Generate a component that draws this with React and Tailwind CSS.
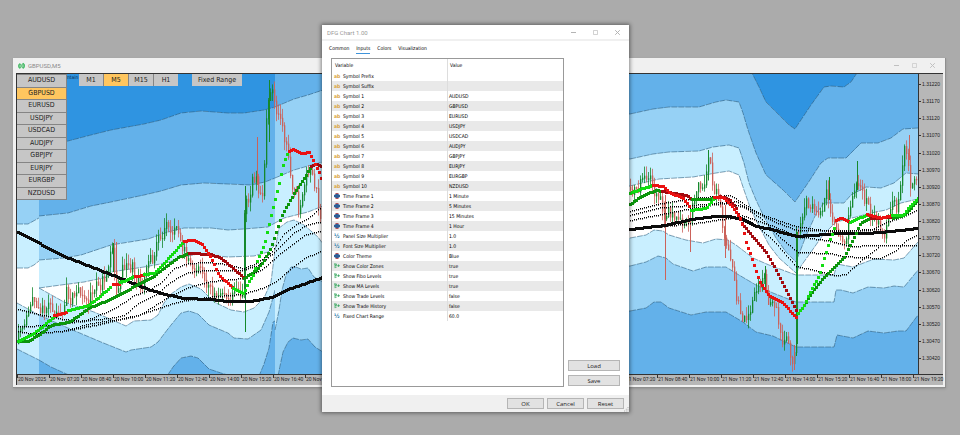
import React, { useState } from "react";
import clsx from "clsx";

const SYMBOLS = ["AUDUSD", "GBPUSD", "EURUSD", "USDJPY", "USDCAD", "AUDJPY", "GBPJPY", "EURJPY", "EURGBP", "NZDUSD"];
const TIMEFRAMES = ["M1", "M5", "M15", "H1"];
const TABS = ["Common", "Inputs", "Colors", "Visualization"];

const INPUTS = [
    ["text", "Symbol Prefix", ""],
    ["text", "Symbol Suffix", ""],
    ...SYMBOLS.map((s, i) => ["text", `Symbol ${i + 1}`, s]),
    ["enum", "Time Frame 1", "1 Minute"],
    ["enum", "Time Frame 2", "5 Minutes"],
    ["enum", "Time Frame 3", "15 Minutes"],
    ["enum", "Time Frame 4", "1 Hour"],
    ["number", "Panel Size Multiplier", "1.0"],
    ["number", "Font Size Multiplier", "1.0"],
    ["enum", "Color Theme", "Blue"],
    ["bool", "Show Color Zones", "true"],
    ["bool", "Show Fibo Levels", "true"],
    ["bool", "Show MA Levels", "true"],
    ["bool", "Show Trade Levels", "false"],
    ["bool", "Show Trade History", "false"],
    ["number", "Fixed Chart Range", "60.0"],
];

const PRICES = Array.from({ length: 17 }, (_, i) => (1.3122 - i * 0.0005).toFixed(5));

// one label every 80 minutes, the first one carries the year
const TIMES = Array.from({ length: 29 }, (_, i) => {
    if (i === 0) return "20 Nov 2025";
    const min = 360 + i * 80;
    const day = 20 + Math.floor(min / 1440);
    const hh = String(Math.floor(min / 60) % 24).padStart(2, "0");
    const mm = String(min % 60).padStart(2, "0");
    return `${day} Nov ${hh}:${mm}`;
});

const C1 = "#2f94e1";
const C2 = "#63b1ea";
const C3 = "#96d1f5";
const C4 = "#c9efff";
const W = "#ffffff";

const ZONES = [
    {
        from: 16, to: 38, base: C3,
        layers: [
            [C4, [16, 224, 27, 224, 38, 218]],
            [W, [16, 268, 27, 268, 33, 265, 38, 261]],
            [C4, [16, 303, 38, 315]],
            [C3, [16, 349, 38, 360]],
        ],
    },
    {
        from: 38, to: 274, base: C1,
        layers: [
            [C2, [38, 147, 67, 141, 90, 135, 110, 130, 143, 124, 160, 120, 180, 113, 200, 111, 227, 113, 243, 113, 263, 110, 274, 107]],
            [C3, [38, 216, 67, 213, 90, 206, 110, 202, 143, 195, 160, 191, 180, 185, 203, 183, 227, 184, 250, 185, 264, 182, 274, 178]],
            [C4, [38, 260, 63, 258, 80, 255, 110, 245, 147, 239, 167, 232, 183, 228, 210, 228, 227, 230, 243, 229, 267, 227, 274, 223]],
            [W, [38, 288, 60, 285, 83, 282, 107, 277, 110, 272, 143, 267, 165, 263, 182, 257, 197, 254, 227, 257, 253, 256, 267, 252, 274, 245]],
            [C4, [38, 288, 63, 302, 93, 312, 125, 326, 133, 321, 150, 320, 157, 315, 163, 303, 170, 294, 180, 287, 188, 284, 200, 289, 213, 302, 230, 310, 243, 312, 253, 308, 263, 298, 270, 282, 274, 250]],
            [C3, [38, 315, 67, 328, 100, 342, 125, 352, 130, 350, 150, 347, 157, 342, 163, 334, 170, 325, 180, 313, 188, 311, 197, 314, 208, 325, 227, 333, 233, 338, 247, 339, 260, 330, 268, 312, 274, 290]],
            [C2, [38, 360, 50, 367, 70, 376, 166, 376, 172, 367, 180, 358, 190, 356, 197, 358, 208, 369, 220, 373, 230, 376, 258, 376, 263, 364, 268, 348, 272, 322, 274, 321]],
        ],
    },
    {
        from: 274, to: 629, base: C2,
        layers: [
            [C3, [274, 107, 293, 99, 307, 95, 322, 90, 629, 114]],
            [C4, [274, 178, 293, 170, 307, 166, 322, 162, 629, 159]],
            [W, [274, 223, 283, 218, 307, 212, 322, 206, 629, 186]],
            [C4, [274, 250, 278, 228, 286, 222, 293, 220, 303, 225, 317, 237, 322, 244, 629, 238]],
            [C3, [274, 330, 278, 310, 281, 290, 285, 275, 290, 267, 295, 267, 300, 269, 307, 268, 313, 277, 322, 282, 629, 266]],
            [C2, [277, 376, 279, 366, 282, 352, 287, 342, 292, 338, 300, 340, 307, 339, 314, 347, 322, 352, 629, 311]],
        ],
    },
    {
        from: 629, to: 917, base: C2,
        layers: [
            [C1, [749, 70, 752, 75, 758, 87, 765, 102, 778, 115, 788, 125, 794, 129, 810, 105, 823, 87, 830, 86, 843, 87, 850, 82, 858, 70]],
            [C3, [629, 114, 652, 109, 668, 107, 698, 107, 715, 102, 725, 100, 738, 102, 742, 113, 747, 130, 755, 153, 765, 175, 782, 190, 794, 202, 807, 183, 820, 163, 827, 158, 845, 158, 860, 143, 877, 143, 890, 138, 902, 129, 917, 128]],
            [C4, [629, 159, 652, 154, 668, 152, 698, 151, 712, 147, 728, 145, 738, 148, 743, 163, 748, 183, 755, 200, 763, 217, 775, 238, 785, 252, 795, 262, 805, 236, 815, 214, 823, 203, 843, 203, 850, 195, 865, 187, 880, 188, 893, 183, 905, 173, 917, 174]],
            [W, [629, 186, 658, 179, 692, 177, 715, 173, 728, 171, 738, 175, 743, 190, 750, 210, 758, 226, 768, 245, 778, 258, 795, 273, 810, 252, 822, 235, 835, 222, 855, 217, 870, 213, 885, 210, 900, 203, 917, 199]],
            [C4, [629, 238, 645, 235, 653, 230, 662, 231, 668, 235, 685, 240, 702, 243, 715, 239, 727, 240, 735, 245, 752, 258, 768, 265, 795, 275, 833, 275, 836, 264, 852, 267, 873, 259, 893, 260, 903, 258, 917, 242]],
            [C3, [629, 266, 645, 262, 657, 256, 665, 258, 672, 264, 692, 271, 705, 267, 725, 267, 738, 275, 755, 285, 772, 293, 795, 302, 833, 302, 835, 290, 840, 290, 852, 293, 867, 287, 883, 288, 893, 286, 903, 287, 917, 270]],
            [C2, [629, 311, 645, 308, 653, 302, 660, 302, 668, 308, 690, 315, 705, 312, 725, 312, 742, 322, 755, 332, 772, 336, 795, 347, 833, 347, 836, 335, 852, 338, 867, 331, 883, 333, 897, 331, 905, 331, 917, 315]],
        ],
    },
];

const BLACK = "#0b0b0b";
const BRIGHT_GREEN = "#12dd12";
const BRIGHT_RED = "#ea1111";
const DARK_GREEN = "#0c960c";
const DARK_RED = "#a30b10";

const LEVELS = [
    [17, 309, 43, 315, 63, 319, 83, 321, 97, 315, 110, 310, 123, 302, 133, 295, 147, 290, 160, 282, 173, 268, 187, 263, 203, 262, 220, 263, 243, 268, 257, 262, 270, 252, 283, 233, 297, 223, 307, 218, 322, 205],
    [17, 326, 50, 325, 83, 320, 107, 318, 123, 315, 137, 303, 157, 293, 165, 285, 177, 277, 187, 272, 203, 270, 240, 270, 257, 265, 273, 252, 293, 232, 307, 224, 322, 221],
    [17, 331, 30, 333, 60, 331, 93, 325, 113, 320, 140, 314, 157, 303, 170, 295, 180, 290, 193, 285, 210, 281, 240, 278, 260, 270, 283, 250, 303, 235, 322, 230],
    [61, 331, 90, 323, 130, 317, 157, 308, 175, 302, 190, 299, 215, 296, 240, 294, 260, 288, 275, 281, 290, 268, 305, 257, 322, 250],
    [629, 211, 660, 203, 700, 197, 730, 195, 745, 205, 760, 214, 795, 226, 830, 231, 870, 230, 885, 222, 900, 217, 917, 209],
    [629, 215, 660, 207, 690, 205, 720, 202, 745, 207, 770, 220, 797, 230, 840, 230, 880, 229],
    [629, 220, 670, 212, 700, 206, 735, 201, 760, 218, 780, 238, 797, 252, 830, 253, 843, 256, 880, 258, 895, 250, 905, 240, 917, 234],
    [629, 228, 670, 225, 700, 222, 740, 216, 757, 226, 775, 243, 795, 266, 815, 270, 835, 275, 845, 274, 860, 260, 877, 247],
    [741, 215, 770, 225, 797, 236, 825, 240, 850, 246, 870, 245, 917, 245],
];

const AVERAGES = [
    [BLACK, [17, 232, 63, 256, 117, 277, 147, 289, 160, 293, 183, 298, 210, 299, 227, 301, 250, 301, 270, 297, 290, 288, 322, 277]],
    [BLACK, [629, 229, 664, 225, 690, 219, 715, 216, 728, 216, 740, 219, 755, 226, 770, 229, 795, 236, 810, 235, 840, 233, 867, 233, 890, 231, 917, 228]],
    // medium average
    [DARK_GREEN, [17, 341, 27, 341, 40, 333, 50, 325, 67, 322, 75, 317, 87, 308, 107, 300, 123, 292, 137, 284, 150, 278, 160, 270, 177, 257, 188, 253]],
    [DARK_RED, [188, 253, 210, 254, 220, 258, 232, 268, 243, 278]],
    [DARK_GREEN, [243, 278, 255, 270, 263, 260, 270, 247, 275, 232, 280, 217, 285, 207, 293, 193, 303, 178, 310, 166]],
    [DARK_RED, [310, 166, 315, 164, 322, 167]],
    [DARK_GREEN, [629, 204, 642, 195, 655, 190, 661, 191]],
    [DARK_RED, [661, 191, 685, 195, 691, 199]],
    [DARK_GREEN, [691, 199, 708, 199, 719, 196]],
    [DARK_RED, [719, 196, 728, 199, 735, 208, 740, 222, 748, 232, 765, 252, 775, 270, 785, 290, 795, 310]],
    [DARK_GREEN, [797, 313, 803, 305, 810, 293, 823, 277, 843, 257, 853, 237, 860, 222, 870, 218]],
    [DARK_RED, [870, 218, 892, 217]],
    [DARK_GREEN, [892, 218, 903, 215, 917, 200]],
    // fast average
    [BRIGHT_GREEN, [17, 341, 30, 335, 43, 325, 53, 316]],
    [BRIGHT_RED, [53, 315, 65, 312]],
    [BRIGHT_GREEN, [67, 310, 87, 305, 97, 298, 110, 286]],
    [BRIGHT_RED, [112, 284, 118, 284]],
    [BRIGHT_GREEN, [119, 282, 125, 280, 133, 276]],
    [BRIGHT_RED, [134, 276, 143, 275]],
    [BRIGHT_GREEN, [143, 274, 153, 273, 160, 266, 170, 255, 183, 241]],
    [BRIGHT_RED, [183, 241, 187, 240, 193, 240, 202, 245, 210, 258, 218, 275, 231, 287]],
    [BRIGHT_GREEN, [232, 288, 243, 293, 247, 282, 252, 275, 257, 258, 263, 245, 270, 215, 277, 187, 282, 165, 287, 151]],
    [BRIGHT_RED, [288, 151, 292, 149, 300, 153, 308, 152, 313, 162, 318, 172, 322, 183]],
    [BRIGHT_GREEN, [629, 193, 642, 188, 652, 185]],
    [BRIGHT_RED, [652, 185, 662, 186, 668, 192, 682, 198, 689, 207]],
    [BRIGHT_GREEN, [690, 210, 705, 208, 713, 198]],
    [BRIGHT_RED, [713, 197, 722, 197, 732, 207, 740, 220, 745, 242, 752, 262, 758, 280, 768, 295, 782, 303, 795, 317]],
    [BRIGHT_GREEN, [797, 313, 803, 305, 810, 290, 818, 275, 823, 258, 828, 242, 834, 225]],
    [BRIGHT_RED, [835, 220, 840, 218, 848, 221]],
    [BRIGHT_GREEN, [849, 222, 857, 218, 866, 215]],
    [BRIGHT_RED, [866, 214, 880, 218, 891, 215]],
    [BRIGHT_GREEN, [891, 215, 902, 215, 908, 207, 917, 198]],
];

const PRICE_PATHS = [
    [17, 344, 20, 328, 26, 326, 32, 297, 37, 302, 43, 309, 50, 307, 57, 315, 64, 320, 67, 290, 70, 305, 77, 290, 82, 297, 89, 303, 94, 287, 101, 284, 107, 272, 111, 250, 114, 255, 116, 289, 120, 280, 124, 266, 133, 268, 137, 279, 143, 284, 147, 262, 153, 260, 158, 237, 163, 238, 167, 219, 172, 232, 176, 224, 180, 238, 185, 252, 193, 273, 198, 265, 207, 282, 217, 300, 223, 290, 230, 304, 235, 287, 243, 296, 244, 240, 246, 190, 250, 204, 254, 175, 257, 178, 260, 203, 264, 185, 268, 100, 273, 92, 278, 114, 283, 128, 288, 150, 292, 183, 297, 197, 300, 214, 305, 182, 310, 165, 315, 182, 322, 218],
    [629, 183, 637, 193, 645, 174, 650, 178, 655, 193, 661, 194, 664, 225, 667, 212, 672, 211, 677, 218, 687, 222, 690, 226, 694, 198, 700, 183, 703, 190, 709, 158, 712, 172, 715, 193, 720, 197, 724, 232, 732, 262, 737, 300, 742, 315, 747, 320, 752, 306, 758, 287, 765, 276, 768, 298, 773, 300, 778, 315, 782, 344, 787, 337, 793, 358, 795, 350, 797, 236, 800, 228, 803, 216, 807, 200, 815, 207, 822, 217, 828, 190, 832, 217, 837, 234, 845, 246, 849, 220, 852, 196, 860, 182, 865, 197, 871, 216, 878, 222, 885, 240, 890, 212, 894, 198, 898, 213, 902, 180, 905, 147, 909, 160, 911, 186, 917, 176],
];

// single bars with long shadows
const SPIKES = [
    [112, 243, 272, "up"], [115, 242, 297, "down"], [244, 186, 332, "up"], [256, 137, 185, "down"],
    [268, 80, 142, "up"], [273, 84, 100, "down"], [664, 195, 280, "down"], [689, 205, 252, "down"], [707, 150, 180, "up"],
    [724, 205, 258, "down"], [764, 266, 290, "up"], [793, 345, 370, "down"], [795, 228, 356, "up"],
    [828, 177, 200, "up"], [856, 161, 190, "up"], [908, 135, 160, "down"],
];

const UP = "#15882c";
const DOWN = "#cb625a";

function yAt(points, x) {
    for (let i = 2; i < points.length; i += 2) {
        if (x <= points[i]) {
            const t = (x - points[i - 2]) / (points[i] - points[i - 2]);
            return points[i - 1] + t * (points[i + 1] - points[i - 1]);
        }
    }
    return points[points.length - 1];
}

// one square mark per bar, bars are two units apart
function marks(points, width, height) {
    let d = "";
    const half = Math.floor(width / 2);
    const end = points[points.length - 2];
    for (let x = points[0]; x <= end; x += 2) {
        d += `M${x - half} ${Math.round(yAt(points, x)) - half}h${width}v${height}h-${width}z`;
    }
    return d;
}

function linePath(points) {
    let d = `M${points[0]} ${points[1]}`;
    for (let i = 2; i < points.length; i += 2) d += `L${points[i]} ${points[i + 1]}`;
    return d;
}

function noise(n) {
    const v = Math.sin(n * 12.9898) * 43758.5453;
    return v - Math.floor(v);
}

function buildCandles() {
    const out = [];
    PRICE_PATHS.forEach((path) => {
        const end = path[path.length - 2];
        for (let x = path[0]; x < end; x += 2) {
            const open = yAt(path, x) + (noise(x) - 0.5) * 12;
            const close = yAt(path, x + 2) + (noise(x + 2) - 0.5) * 12;
            out.push({
                x,
                top: Math.min(open, close),
                bottom: Math.max(open, close) + 1,
                high: Math.min(open, close) - noise(x + 91) * 10,
                low: Math.max(open, close) + noise(x + 47) * 10,
                up: close < open,
            });
        }
    });
    return out;
}

const CANDLES = buildCandles();

function PriceChart() {
    return (
        <svg
            viewBox="16 74 901 300"
            preserveAspectRatio="none"
            className="block h-full w-full"
            role="img"
            aria-label="GBPUSD price chart"
        >
            {ZONES.map((zone) => (
                <g key={zone.from}>
                    <rect x={zone.from} y="74" width={zone.to - zone.from} height="300" fill={zone.base} shapeRendering="crispEdges" />
                    {zone.layers.map(([fill, points], i) => (
                        <path
                            key={i}
                            d={fill === C1 ? `${linePath(points)}Z` : `${linePath(points)}V376H${points[0]}Z`}
                            fill={fill}
                            shapeRendering="crispEdges"
                        />
                    ))}
                    {zone.layers.map(([, points], i) => (
                        <path
                            key={i}
                            d={linePath(points)}
                            fill="none"
                            stroke="#34627f"
                            strokeWidth="0.6"
                            strokeDasharray="6 1"
                        />
                    ))}
                </g>
            ))}
            {CANDLES.map((c) => (
                <g key={c.x} fill={c.up ? UP : DOWN}>
                    <rect x={c.x} y={c.high} width="0.8" height={c.low - c.high} />
                    <rect x={c.x} y={c.top} width="1.3" height={c.bottom - c.top} />
                </g>
            ))}
            {SPIKES.map(([x, high, low, dir]) => (
                <rect key={x} x={x} y={high} width="1" height={low - high} fill={dir === "up" ? UP : DOWN} />
            ))}
            <rect x="795" y="232" width="2" height="112" fill={UP} />
            {LEVELS.map((points, i) => (
                <path key={i} d={marks(points, 1, 1.6)} fill="#000" />
            ))}
            {AVERAGES.map(([color, points], i) => (
                <path key={i} d={marks(points, 3, 3)} fill={color} />
            ))}
        </svg>
    );
}

function PanelButton({ active, className, children, ...props }) {
    return (
        <button
            type="button"
            className={clsx(
                "flex items-center justify-center text-[7px] leading-none text-[#222]",
                active ? "bg-[#ffc65f]" : "bg-[#c6c6c6]",
                className
            )}
            {...props}
        >
            {children}
        </button>
    );
}

function ChartWindow() {
    const [symbol, setSymbol] = useState("GBPUSD");
    const [timeframe, setTimeframe] = useState("M5");

    return (
        <section className="border-r border-b border-[#8f8f8f] bg-[#f0f0f0] pr-[2px] pb-[2px] pl-[3px] shadow-sm">
            <header className="flex h-[15px] items-center gap-[3px] pr-[8px] pl-[2px] text-[#8a8a8a]">
                <svg viewBox="0 0 8 8" className="h-[8px] w-[7px]" fill="none" stroke="#35b558" strokeWidth="1">
                    <path d="M2 1v6M6 0.5v6.5" />
                    <rect x="0.6" y="2" width="2.8" height="4" rx="1" />
                    <rect x="4.6" y="1.5" width="2.8" height="4.5" rx="1" />
                </svg>
                <h1 className="font-['Roboto',sans-serif] text-[6px]">{symbol},{timeframe}</h1>
                <div className="ml-auto flex gap-[13px] text-[#c0c0c0]">
                    <WindowControls />
                </div>
            </header>

            <div className="border-t border-l border-[#333] bg-[#b7b7b7]">
                <div className="flex h-[300px]">
                    <div className="relative min-w-0 flex-1 border-r border-[#333]">
                        <PriceChart />
                        <div className="absolute top-0 left-0 flex items-start font-['DejaVu_Sans_Condensed','DejaVu_Sans',sans-serif]">
                            <div className="grid h-[126px] w-[50px] grid-rows-10 gap-px border-y border-r border-[#858585] bg-[#858585]">
                                {SYMBOLS.map((s) => (
                                    <PanelButton key={s} active={s === symbol} onClick={() => setSymbol(s)}>
                                        {s}
                                    </PanelButton>
                                ))}
                            </div>
                            <span className="w-[12px] overflow-hidden text-[5px] leading-[7px] text-[#0b2c4a]">ntain</span>
                            <div className="flex gap-px bg-[#858585]">
                                {TIMEFRAMES.map((t) => (
                                    <PanelButton
                                        key={t}
                                        active={t === timeframe}
                                        className="h-[12px] w-[24px]"
                                        onClick={() => setTimeframe(t)}
                                    >
                                        {t}
                                    </PanelButton>
                                ))}
                            </div>
                            <PanelButton className="ml-[14px] h-[12px] w-[50px]">Fixed Range</PanelButton>
                        </div>
                    </div>
                    <ul className="flex w-[24px] flex-col pt-[2px] pb-[7px] font-['Liberation_Sans',sans-serif] text-[5px] leading-none text-[#222]">
                        {PRICES.map((p) => (
                            <li key={p} className="flex flex-1 items-center gap-px">
                                <span className="h-px w-[2px] bg-[#333]" />
                                {p}
                            </li>
                        ))}
                    </ul>
                </div>
                <ul className="flex h-[11px] border-t border-[#333] font-['Roboto',sans-serif] text-[5px] leading-[9px] text-[#222]">
                    {TIMES.map((t) => (
                        <li key={t} className="w-8 shrink-0 whitespace-nowrap last:w-0">
                            <span className="inline-block h-[3px] w-px bg-[#333] align-top" />
                            {t}
                        </li>
                    ))}
                </ul>
            </div>
        </section>
    );
}

function WindowControls() {
    return (
        <>
            <button type="button" aria-label="Minimize">
                <svg viewBox="0 0 5 5" className="size-[5px]" fill="none" stroke="currentColor"><path d="M0 2.5h5" /></svg>
            </button>
            <button type="button" aria-label="Maximize">
                <svg viewBox="0 0 5 5" className="size-[5px]" fill="none" stroke="currentColor" strokeWidth="0.6"><path d="M.5 .5h4v4h-4z" /></svg>
            </button>
            <button type="button" aria-label="Close">
                <svg viewBox="0 0 5 5" className="size-[5px]" fill="none" stroke="currentColor"><path d="M.2 .2l4.6 4.6M4.8 .2L.2 4.8" /></svg>
            </button>
        </>
    );
}

function TypeIcon({ type }) {
    if (type === "text") {
        return <span aria-hidden="true" className="text-[5px] font-bold text-[#d8a23a]">ab</span>;
    }
    if (type === "number") {
        return <span aria-hidden="true" className="text-[6px] font-bold text-[#2a78a8]">½</span>;
    }
    if (type === "enum") {
        return (
            <svg viewBox="0 0 6 6" className="size-[6px]">
                <path d="M1.5 0h3v2h-3zM1.5 4h3v2h-3z" fill="#b5525a" />
                <rect x="0" y="1.8" width="6" height="2.4" fill="#2e5f98" />
                <rect x="1.2" y="1" width="3.6" height="4" rx="1" fill="#2e5f98" />
            </svg>
        );
    }
    return (
        <svg viewBox="0 0 7 6" className="h-[6px] w-[7px]" fill="none" stroke="#2fa257" strokeWidth="0.9">
            <path d="M0 .6h1.2v4.8M1.2 .6h1.6v2H1.2M1.6 5.4l1.6-1.6M3.8 2.6h3M5.3 1.1v3" />
        </svg>
    );
}

function DialogButton({ className, children }) {
    return (
        <button
            type="button"
            className={clsx("h-[11px] border border-[#b5b5b5] bg-[#e2e2e2] font-['Open_Sans',sans-serif] text-[6px] leading-none text-[#222]", className)}
        >
            {children}
        </button>
    );
}

function SettingsDialog() {
    const [tab, setTab] = useState("Inputs");

    return (
        <section
            role="dialog"
            aria-label="DFG Chart 1.00"
            className="absolute top-[25px] left-[322px] w-[307px] bg-white font-['DejaVu_Sans_Condensed','DejaVu_Sans',sans-serif] text-[5px] text-black shadow-[0_0_4px_1px_rgba(0,0,0,0.45)]"
        >
            <header className="flex h-[16px] items-center justify-between border-b-2 border-[#f0f0f0] pr-[9px] pl-[5px]">
                <h2 className="font-['Roboto',sans-serif] text-[6px] text-[#999]">DFG Chart 1.00</h2>
                <div className="flex gap-[17px] text-[#b4b4b4]">
                    <WindowControls />
                </div>
            </header>

            <nav role="tablist" className="flex gap-[7px] px-[7px] pt-[2px] leading-[10px]">
                {TABS.map((t) => (
                    <button
                        key={t}
                        type="button"
                        role="tab"
                        aria-selected={t === tab}
                        onClick={() => setTab(t)}
                        className={clsx("border-b", t === tab ? "border-[#3f94da]" : "border-transparent")}
                    >
                        {t}
                    </button>
                ))}
            </nav>

            <div className="flex gap-[4px] px-[9px] pt-[4px] pb-[8px]">
                <div className="h-[329px] min-w-0 flex-1 border border-[#999]">
                    <table className="w-full table-fixed border-collapse text-left leading-[10px]">
                        <thead>
                            <tr className="h-[12px]">
                                <th className="w-1/2 border-r border-[#ddd] pl-[3px] font-normal">Variable</th>
                                <th className="pl-[2px] font-normal">Value</th>
                            </tr>
                        </thead>
                        <tbody>
                            {INPUTS.map(([type, name, value]) => (
                                <tr key={name} className="h-[10px] even:bg-[#e9e9e9]">
                                    <td className="border-r border-[#ddd] p-0">
                                        <div className="flex h-[10px] items-center gap-[3px] pl-[2px]">
                                            <span className="flex w-[6px] items-center"><TypeIcon type={type} /></span>
                                            {name}
                                        </div>
                                    </td>
                                    <td className="p-0 pl-[1px]">{value}</td>
                                </tr>
                            ))}
                        </tbody>
                    </table>
                </div>
                <div className="flex w-[52px] flex-col justify-end gap-[4px] pb-[1px]">
                    <DialogButton>Load</DialogButton>
                    <DialogButton>Save</DialogButton>
                </div>
            </div>

            <footer className="relative flex h-[17px] items-center justify-end gap-[3px] bg-[#f0f0f0] pr-[5px]">
                <DialogButton className="w-[37px]">OK</DialogButton>
                <DialogButton className="w-[37px]">Cancel</DialogButton>
                <DialogButton className="w-[37px]">Reset</DialogButton>
                <svg viewBox="0 0 5 5" className="absolute right-0 bottom-0 size-[5px]" fill="#b0b0b0">
                    <path d="M3.5 0h1v1h-1zM3.5 1.8h1v1h-1zM3.5 3.6h1v1h-1zM1.8 1.8h1v1h-1zM1.8 3.6h1v1h-1zM0 3.6h1v1H0z" />
                </svg>
            </footer>
        </section>
    );
}

export default function App() {
    return (
        <main className="relative min-h-screen bg-[#ababab] pt-[58px] pr-[14px] pl-[13px]">
            <ChartWindow />
            <SettingsDialog />
        </main>
    );
}
